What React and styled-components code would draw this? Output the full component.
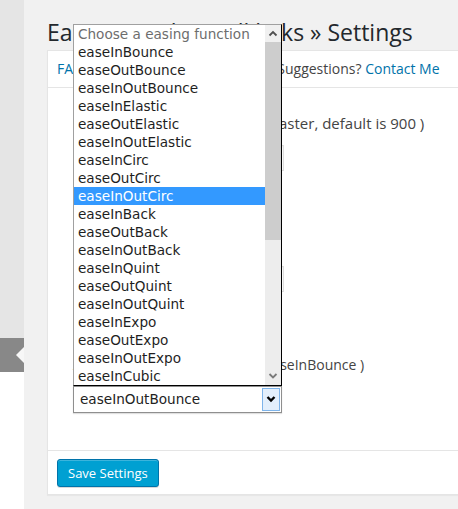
import React from "react";
import styled, { createGlobalStyle } from "styled-components";

const GlobalStyle = createGlobalStyle`
  html, body {
    margin: 0;
    padding: 0;
  }
  body {
    background: #f1f1f1;
    font-family: "Open Sans", "Liberation Sans", sans-serif;
    font-size: 13px;
    color: #444;
    overflow: hidden;
  }
`;

const Page = styled.div`
  display: flex;
  width: 458px;
  height: 509px;
  overflow: hidden;
`;

const Sidebar = styled.div`
  width: 24px;
  flex-shrink: 0;
  display: flex;
  flex-direction: column;
  background: #fff;
`;

const MenuBack = styled.div`
  height: 338px;
  background: #e5e5e5;
`;

const MenuCurrent = styled.div`
  position: relative;
  height: 34px;
  background: #888;

  &::after {
    content: "";
    position: absolute;
    right: 0;
    top: 9px;
    border-style: solid;
    border-width: 8px 8px 8px 0;
    border-color: transparent #f7f7f7 transparent transparent;
  }
`;

const Main = styled.div`
  flex: 1;
  padding-left: 23px;
  overflow: hidden;
`;

const Title = styled.h1`
  margin: 0 0 2px;
  padding-top: 18px;
  font-size: 23px;
  line-height: 29.9px;
  font-weight: 400;
  color: #23282d;
  white-space: nowrap;
`;

const Panel = styled.div`
  width: 440px;
  background: #fff;
  border: 1px solid #e5e5e5;
  box-shadow: 0 1px 1px rgba(0, 0, 0, 0.04);
`;

const Tabs = styled.div`
  padding: 8px 9px;
  font-size: 14px;
  line-height: 20px;
  color: #444;
  white-space: nowrap;
  border-bottom: 1px solid #e5e5e5;
`;

const Link = styled.a`
  color: #0073aa;
  text-decoration: none;
`;

const Body = styled.div`
  padding: 25px 0 37px 25px;
  display: flex;
  flex-direction: column;
  gap: 63px;
`;

const Field = styled.div`
  display: flex;
  flex-direction: column;
  gap: ${(p) => p.$gap || 12}px;
`;

const Desc = styled.p`
  margin: 0;
  font-size: ${(p) => p.$size || 14}px;
  line-height: 20px;
  color: #444;
  white-space: nowrap;
`;

const TextInput = styled.div`
  box-sizing: border-box;
  width: 211px;
  height: 26px;
  border: 1px solid #ddd;
  background: #fff;
  box-shadow: inset 0 1px 2px rgba(0, 0, 0, 0.07);
`;

const SelectWrap = styled.div`
  position: relative;
  width: 209px;
  height: 27px;
`;

const SelectBox = styled.div`
  box-sizing: border-box;
  height: 100%;
  display: flex;
  align-items: center;
  padding: 0 1px 0 6px;
  border: 1px solid #8f8f8f;
  background: #fff;
  box-shadow: 0 1px 1px rgba(0, 0, 0, 0.12);
  font-family: "DejaVu Sans", Verdana, sans-serif;
  font-size: 13.6px;
  color: #222;
`;

const SelectButton = styled.div`
  box-sizing: border-box;
  margin-left: auto;
  width: 18px;
  height: 23px;
  display: flex;
  align-items: center;
  justify-content: center;
  border: 1px solid #7eb4ea;
  background: #e3effc;
`;

const ListBox = styled.div`
  position: absolute;
  left: 0;
  bottom: 100%;
  box-sizing: border-box;
  width: 209px;
  height: 362px;
  display: flex;
  background: #fff;
  border: 1px solid;
  border-color: #a0a0a0 #000 #000 #a0a0a0;
  z-index: 5;
`;

const Options = styled.div`
  flex: 1;
  overflow: hidden;
`;

const Option = styled.div`
  height: 18px;
  line-height: 18px;
  padding-left: 4px;
  font-family: "DejaVu Sans", Verdana, sans-serif;
  font-size: 13.6px;
  white-space: nowrap;
  color: ${(p) => (p.$selected ? "#fff" : p.$placeholder ? "#6d6d6d" : "#1e1e1e")};
  background: ${(p) => (p.$selected ? "#3399ff" : "transparent")};
`;

const ScrollBar = styled.div`
  width: 16px;
  display: flex;
  flex-direction: column;
  background: #ededed;
`;

const ScrollArrow = styled.div`
  height: ${(p) => p.$h}px;
  display: flex;
  align-items: center;
  justify-content: center;
  background: ${(p) => p.$bg};
`;

const Thumb = styled.div`
  height: 198px;
  background: #cdcdcd;
`;

const Track = styled.div`
  flex: 1;
`;

const Footer = styled.div`
  padding: 8px 9px 7px;
  border-top: 1px solid #e5e5e5;
`;

const SaveButton = styled.button`
  box-sizing: border-box;
  height: 28px;
  padding: 0 10px;
  font-family: "Open Sans", "Liberation Sans", sans-serif;
  font-size: 13px;
  line-height: 26px;
  color: #fff;
  background: #00a0d2;
  border: 1px solid #0073aa;
  border-radius: 3px;
  box-shadow: inset 0 1px 0 rgba(120, 200, 230, 0.5), 0 1px 0 rgba(0, 0, 0, 0.15);
  cursor: pointer;
`;

const easings = [
  "easeInBounce", "easeOutBounce", "easeInOutBounce",
  "easeInElastic", "easeOutElastic", "easeInOutElastic",
  "easeInCirc", "easeOutCirc", "easeInOutCirc",
  "easeInBack", "easeOutBack", "easeInOutBack",
  "easeInQuint", "easeOutQuint", "easeInOutQuint",
  "easeInExpo", "easeOutExpo", "easeInOutExpo",
  "easeInCubic", "easeOutCubic", "easeInOutCubic",
  "easeInQuad", "easeOutQuad", "easeInOutQuad",
  "easeInSine", "easeOutSine", "easeInOutSine", "linear", "swing",
];

const Chevron = ({ up, color, width = 1.8 }) => (
  <svg width="16" height="10" viewBox="0 0 16 10">
    <polyline
      points={up ? "4.5,7.5 8,4 11.5,7.5" : "4.5,3 8,6.5 11.5,3"}
      fill="none"
      stroke={color}
      strokeWidth={width}
    />
  </svg>
);

export default function App() {
  return (
    <Page>
      <GlobalStyle />
      <Sidebar>
        <MenuBack />
        <MenuCurrent />
      </Sidebar>
      <Main>
        <Title>Easy Smooth Scroll links » Settings</Title>
        <Panel>
          <Tabs>
            <Link>FAQ</Link> | <Link>Documentation</Link> | Issues or Suggestions?{" "}
            <Link>Contact Me</Link>
          </Tabs>
          <Body>
            <Field>
              <Desc $size={15}>Scroll duration ( ms, lower is faster, default is 900 )</Desc>
              <TextInput />
            </Field>
            <Field>
              <Desc>Scroll offset ( default is 0 )</Desc>
              <TextInput />
            </Field>
            <Field $gap={11}>
              <Desc>Animation easing: ( default is easeInBounce )</Desc>
              <SelectWrap>
                <ListBox>
                  <Options>
                    <Option $placeholder>Choose a easing function</Option>
                    {easings.map((name) => (
                      <Option key={name} $selected={name === "easeInOutCirc"}>
                        {name}
                      </Option>
                    ))}
                  </Options>
                  <ScrollBar>
                    <ScrollArrow $h={17} $bg="#f0f0f0">
                      <Chevron up color="#505050" />
                    </ScrollArrow>
                    <Thumb />
                    <Track />
                    <ScrollArrow $h={18} $bg="#ededed">
                      <Chevron color="#7a7a7a" />
                    </ScrollArrow>
                  </ScrollBar>
                </ListBox>
                <SelectBox>
                  easeInOutBounce
                  <SelectButton>
                    <Chevron color="#000" width={2.4} />
                  </SelectButton>
                </SelectBox>
              </SelectWrap>
            </Field>
          </Body>
          <Footer>
            <SaveButton>Save Settings</SaveButton>
          </Footer>
        </Panel>
      </Main>
    </Page>
  );
}
